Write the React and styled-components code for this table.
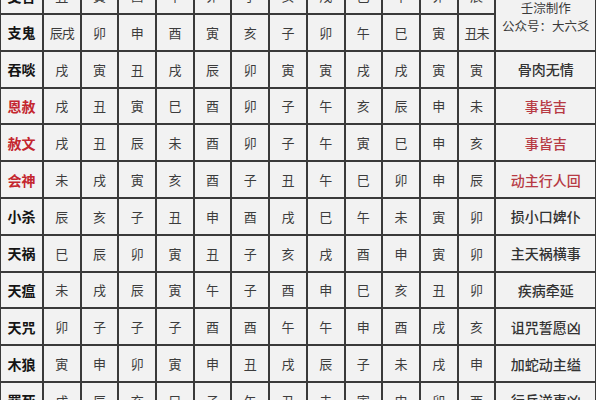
import React from 'react';
import styled, { createGlobalStyle } from 'styled-components';

const GlobalStyle = createGlobalStyle`
  html, body {
    margin: 0;
    padding: 0;
    background: #ffffff;
  }
  body {
    width: 600px;
    height: 400px;
    overflow: hidden;
    font-family: "Noto Sans CJK SC", "Noto Sans", sans-serif;
  }
`;

const rows = [
  { label: '支合', values: ['丑', '寅', '酉', '午', '卯', '子', '亥', '戌', '巳', '午', '卯', '辰'] },
  { label: '支鬼', values: ['辰戌', '卯', '申', '酉', '寅', '亥', '子', '卯', '午', '巳', '寅', '丑未'] },
  { label: '吞啖', values: ['戌', '寅', '丑', '戌', '辰', '卯', '寅', '寅', '戌', '戌', '寅', '寅'], note: '骨肉无情' },
  { label: '恩赦', red: true, values: ['戌', '丑', '寅', '巳', '酉', '卯', '子', '午', '亥', '辰', '申', '未'], note: '事皆吉', noteRed: true },
  { label: '赦文', red: true, values: ['戌', '丑', '辰', '未', '酉', '卯', '子', '午', '寅', '巳', '申', '亥'], note: '事皆吉', noteRed: true },
  { label: '会神', red: true, values: ['未', '戌', '寅', '亥', '酉', '子', '丑', '午', '巳', '卯', '申', '辰'], note: '动主行人回', noteRed: true },
  { label: '小杀', values: ['辰', '亥', '子', '丑', '申', '酉', '戌', '巳', '午', '未', '寅', '卯'], note: '损小口婢仆' },
  { label: '天祸', values: ['巳', '辰', '卯', '寅', '丑', '子', '亥', '戌', '酉', '申', '寅', '卯'], note: '主天祸横事' },
  { label: '天瘟', values: ['未', '戌', '辰', '寅', '午', '子', '酉', '申', '巳', '亥', '丑', '卯'], note: '疾病牵延' },
  { label: '天咒', values: ['卯', '子', '子', '子', '酉', '酉', '午', '午', '申', '酉', '戌', '亥'], note: '诅咒誓愿凶' },
  { label: '木狼', values: ['寅', '申', '卯', '寅', '申', '丑', '戌', '辰', '子', '未', '戌', '申'], note: '加蛇动主缢' },
  { label: '罪死', values: ['戌', '辰', '亥', '巳', '子', '午', '丑', '未', '寅', '申', '卯', '酉'], note: '行兵逆事凶' },
];

const Page = styled.div`
  width: 600px;
  height: 400px;
  overflow: hidden;
  background: #ffffff;
`;

const Grid = styled.div`
  display: grid;
  grid-template-columns: 41px repeat(12, 35.7px) 99px;
  grid-auto-rows: 34.8px;
  gap: 2px;
  padding: 1px;
  width: max-content;
  margin-top: -22.8px;
  background: #3a3a3a;
`;

const Cell = styled.div`
  display: flex;
  align-items: center;
  justify-content: center;
  background: #f2f2f2;
  color: #3c3c3c;
  font-size: 13px;
  font-weight: 400;
  white-space: nowrap;
  letter-spacing: ${p => (p.$wide ? '-1px' : '0')};
`;

const Label = styled(Cell)`
  color: ${p => (p.$red ? '#c4262e' : '#151515')};
  font-size: 14px;
  font-weight: 700;
`;

const Note = styled(Cell)`
  color: ${p => (p.$red ? '#b73a44' : '#333333')};
  font-size: 14px;
  font-weight: 500;
`;

const Credit = styled(Cell)`
  grid-row: span 2;
  flex-direction: column;
  justify-content: flex-start;
  padding-top: 21px;
  font-size: 12.5px;
  line-height: 18px;
  color: #3a3a3a;
`;

export default function App() {
  return (
    <Page>
      <GlobalStyle />
      <Grid>
        {rows.map((row, i) => (
          <React.Fragment key={row.label}>
            <Label $red={row.red}>{row.label}</Label>
            {row.values.map((v, j) => (
              <Cell key={j} $wide={v.length > 1}>{v}</Cell>
            ))}
            {i === 0 && (
              <Credit>
                <span>壬淙制作</span>
                <span>公众号：大六爻</span>
              </Credit>
            )}
            {row.note && <Note $red={row.noteRed}>{row.note}</Note>}
          </React.Fragment>
        ))}
      </Grid>
    </Page>
  );
}
